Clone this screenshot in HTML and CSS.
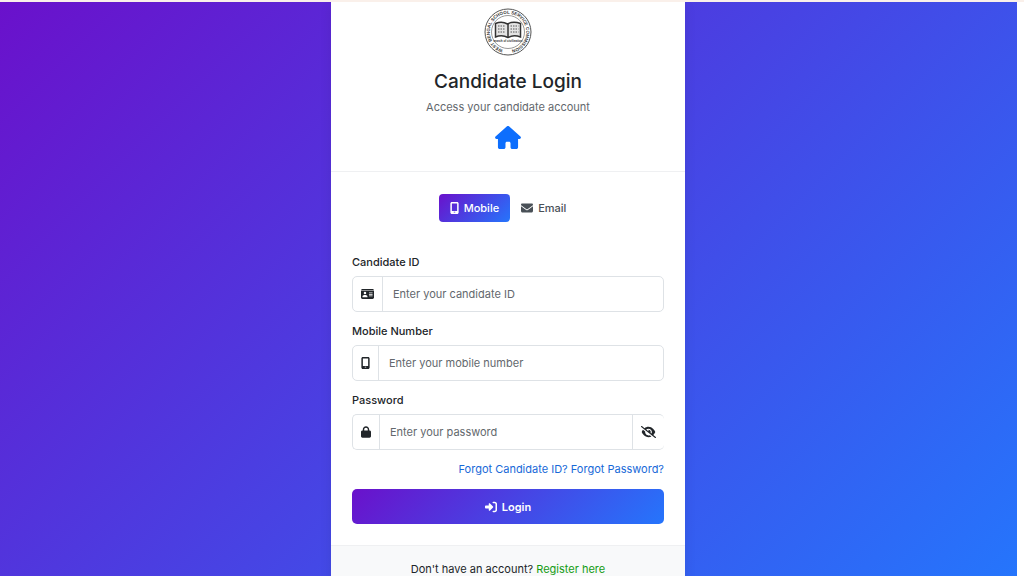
FILE: index.html
```html
<!DOCTYPE html>
<html lang="en">
<head>
<meta charset="utf-8">
<meta name="viewport" content="width=device-width, initial-scale=1">
<title>Candidate Login</title>
<link rel="stylesheet" href="styles.css">
</head>
<body>
<main class="scene">
  <section class="card">
    <header class="card-header">
      <svg class="seal" viewBox="0 0 96 96" role="img" aria-label="West Bengal School Service Commission">
        <defs><path id="ring" d="M48 84.500A36.500 36.500 0 1 1 48.100 84.500"/></defs>
        <circle cx="48" cy="48" r="46" fill="#fff" stroke="#555" stroke-width="2"/>
        <circle cx="48" cy="48" r="33" fill="none" stroke="#777" stroke-width="1.500"/>
        <text class="seal-text"><textPath href="#ring" startOffset="10">WEST BENGAL SCHOOL SERVICE COMMISSION</textPath></text>
        <path d="M23 31Q36 26 47 32Q58 26 73 31V58Q59 53 48 59Q36 53 23 58Z" fill="#e4e4e4" stroke="#333" stroke-width="3"/>
        <path d="M48 32V59" stroke="#333" stroke-width="3"/>
        <path d="M28 36H43M28 42H43M28 48H43M53 36H69M53 42H69M53 48H69" stroke="#555" stroke-width="2" stroke-dasharray="3 2"/>
        <text class="seal-motto" x="48" y="67">march of civilization</text>
      </svg>
      <h1 class="title">Candidate Login</h1>
      <p class="subtitle">Access your candidate account</p>
      <a class="home" href="#" aria-label="Home">
        <svg viewBox="0 0 576 512" width="26" height="23" fill="currentColor"><path d="M575.8 255.5c0 18-15 32.100-32 32.100h-32l.7 160.200c0 2.700-.2 5.400-.5 8.100V472c0 22.100-17.900 40-40 40h-88c-22.100 0-40-17.900-40-40v-88.500c0-17.700-14.300-32-32-32h-48c-17.700 0-32 14.300-32 32V472c0 22.100-17.900 40-40 40h-88c-22.100 0-40-17.900-40-40V287.600H32c-18 0-32-14-32-32.100 0-9 3-17 10-24L266.400 8c7-7 15-8 22-8s15 2 21 7l255.400 224.500c8 7 12 15 11 24z"/></svg>
      </a>
    </header>
    <form class="card-body">
      <div class="tabs">
        <button class="tab tab-active" type="button">
          <svg viewBox="0 0 384 512" width="9" height="12" fill="currentColor"><path fill-rule="evenodd" d="M80 0h224c35 0 64 29 64 64v384c0 35-29 64-64 64H80c-35 0-64-29-64-64V64C16 29 45 0 80 0zm0 64v320h224V64zm80 352v32h64v-32z"/></svg>
          Mobile
        </button>
        <button class="tab" type="button">
          <svg viewBox="0 0 512 512" width="12" height="12" fill="currentColor"><path d="M48 64C21.500 64 0 85.500 0 112c0 15.100 7.100 29.300 19.200 38.400l217.600 163.200c11.400 8.500 27 8.500 38.400 0l217.600-163.200c12.100-9.100 19.200-23.300 19.200-38.400 0-26.500-21.500-48-48-48zM0 176v208c0 35.300 28.700 64 64 64h384c35.300 0 64-28.700 64-64V176L294.400 339.200c-22.800 17.100-54 17.100-76.800 0z"/></svg>
          Email
        </button>
      </div>
      <div class="field">
        <label for="candidate">Candidate ID</label>
        <div class="group">
          <span class="addon"><svg viewBox="0 0 576 512" width="13" height="12" fill="currentColor"><path fill-rule="evenodd" d="M64 32h448c35 0 64 29 64 64H0c0-35 29-64 64-64zM0 128h576v288c0 35-29 64-64 64H64c-35 0-64-29-64-64zm64 256c0 9 7 16 16 16h192c9 0 16-7 16-16 0-44-36-80-80-80h-64c-44 0-80 36-80 80zm112-112a56 56 0 1 0 0-112 56 56 0 0 0 0 112zm176-80v32h160v-32zm0 64v32h160v-32zm0 64v32h160v-32z"/></svg></span>
          <input id="candidate" type="text" placeholder="Enter your candidate ID">
        </div>
      </div>
      <div class="field">
        <label for="mobile">Mobile Number</label>
        <div class="group">
          <span class="addon"><svg viewBox="0 0 384 512" width="9" height="12" fill="currentColor"><path fill-rule="evenodd" d="M80 0h224c35 0 64 29 64 64v384c0 35-29 64-64 64H80c-35 0-64-29-64-64V64C16 29 45 0 80 0zm0 64v320h224V64zm80 352v32h64v-32z"/></svg></span>
          <input id="mobile" type="tel" placeholder="Enter your mobile number">
        </div>
      </div>
      <div class="field">
        <label for="password">Password</label>
        <div class="group group-open">
          <span class="addon"><svg viewBox="0 0 448 512" width="10" height="12" fill="currentColor"><path d="M144 144v48h160v-48c0-44.200-35.800-80-80-80s-80 35.800-80 80zm-64 48v-48C80 64.500 144.500 0 224 0s144 64.500 144 144v48h16c35.300 0 64 28.700 64 64v192c0 35.300-28.700 64-64 64H64c-35.300 0-64-28.700-64-64V256c0-35.300 28.700-64 64-64z"/></svg></span>
          <input id="password" type="password" placeholder="Enter your password">
          <button class="reveal" type="button" aria-label="Show password"><svg viewBox="0 0 640 512" width="15" height="12" fill="currentColor"><path d="M38.800 5.100C28.400-3.100 13.300-1.200 5.100 9.200S-1.200 34.700 9.200 42.900l592 464c10.400 8.200 25.500 6.300 33.700-4.100s6.300-25.500-4.100-33.700L525.600 386.700c39.600-40.600 66.400-86.100 79.900-118.400 3.300-7.900 3.300-16.700 0-24.600-14.900-35.700-46.200-87.700-93-131.100C465.500 68.800 400.800 32 320 32c-68.200 0-125 26.300-169.300 60.800zm184.300 144.400C248.600 126.200 282.700 112 320 112c79.500 0 144 64.500 144 144 0 24.900-6.300 48.300-17.400 68.700L408 294.500c8.400-19.300 10.600-41.400 4.800-63.300-11.100-41.500-47.800-69.400-88.600-71.100-5.800-.2-9.200 6.100-7.400 11.700 2.100 6.400 3.300 13.200 3.300 20.300 0 10.200-2.400 19.800-6.600 28.300zM373 389.900c-16.400 6.500-34.300 10.100-53 10.100-79.500 0-144-64.500-144-144 0-6.900.5-13.600 1.400-20.200l-94.300-74.300C60.300 191.200 44 220.800 34.500 243.700c-3.300 7.900-3.300 16.700 0 24.600 14.900 35.700 46.200 87.700 93 131.100C174.500 443.200 239.200 480 320 480c47.800 0 89.900-12.900 126.200-32.500z"/></svg></button>
        </div>
      </div>
      <div class="help">
        <a href="#">Forgot Candidate ID?</a>
        <a href="#">Forgot Password?</a>
      </div>
      <button class="submit" type="submit">
        <svg viewBox="0 0 512 512" width="12" height="12" fill="currentColor"><path d="M352 96h64c17.700 0 32 14.300 32 32v256c0 17.700-14.300 32-32 32h-64c-17.700 0-32 14.300-32 32s14.300 32 32 32h64c53 0 96-43 96-96V128c0-53-43-96-96-96h-64c-17.700 0-32 14.300-32 32s14.300 32 32 32zM342.600 278.600c12.500-12.500 12.500-32.800 0-45.300l-128-128c-9.200-9.200-22.900-11.900-34.900-6.900S160 115.100 160 128v64H32c-17.700 0-32 14.300-32 32v64c0 17.700 14.300 32 32 32h128v64c0 12.900 7.800 24.600 19.800 29.600s25.700 2.200 34.900-6.900z"/></svg>
        Login
      </button>
    </form>
    <footer class="card-footer">Don't have an account? <a class="register" href="#">Register here</a></footer>
  </section>
</main>
</body>
</html>
```
FILE: styles.css
```css
* { box-sizing: border-box; }

body {
  margin: 0;
  height: 100vh;
  overflow: hidden;
  display: flex;
  border-top: 2px solid #faf0ea;
  padding-right: 7px;
  background: #fff;
  color: #212529;
  font: 12px/18px Inter, "Liberation Sans", sans-serif;
}

a { color: #1769d8; text-decoration: none; }
button, input { font: inherit; color: inherit; }
svg { display: block; flex: none; }

.scene {
  flex: 1;
  display: flex;
  justify-content: center;
  align-items: flex-start;
  padding-right: 1px;
  background: linear-gradient(135deg, #6a11cb, #2575fc);
}

.card {
  width: 100%;
  max-width: 354px;
  background: #fff;
  box-shadow: 0 4px 12px rgba(0, 0, 0, 0.08);
}

.card-header {
  display: flex;
  flex-direction: column;
  align-items: center;
  padding: 6px 20px 22px;
  border-bottom: 1px solid #eff0f2;
}

.seal { width: 48px; height: 48px; }
.seal-text { font: 700 9px "Liberation Sans", sans-serif; fill: #333; }
.seal-motto { font: 700 6px "Liberation Sans", sans-serif; fill: #333; text-anchor: middle; }

.title { margin: 14px 0 0; font-size: 19px; line-height: 24px; font-weight: 500; }
.subtitle { margin: 4px 0 0; color: #63686d; font-size: 11px; }
.home { margin-top: 10px; color: #0d6efd; }

.card-body { padding: 22px 21px 21px; }

.tabs { display: flex; justify-content: center; margin-bottom: 31px; }

.tab {
  display: flex;
  align-items: center;
  gap: 5px;
  height: 28px;
  padding: 0 11px;
  border: 0;
  border-radius: 4px;
  background: none;
  color: #495057;
  font-size: 11px;
  font-weight: 500;
}

.tab-active { background: linear-gradient(135deg, #6a11cb, #2575fc); color: #fff; }

.field { margin-bottom: 10px; }
.field label { display: block; margin-bottom: 5px; font-size: 11px; font-weight: 500; }

.group {
  display: flex;
  height: 36px;
  border: 1px solid #dee2e6;
  border-radius: 5px;
  overflow: hidden;
}

.group-open { border-right: 0; }

.addon {
  display: flex;
  align-items: center;
  padding: 0 8px;
  border-right: 1px solid #dee2e6;
}

.group input {
  flex: 1;
  min-width: 0;
  padding: 0 10px;
  border: 0;
  outline: 0;
  background: none;
  font-size: 11px;
}

.group input::placeholder { color: #63686d; opacity: 1; }

.reveal {
  display: flex;
  align-items: center;
  padding: 0 8px;
  border: 0;
  border-left: 1px solid #dee2e6;
  background: none;
}

.help { margin-bottom: 11px; font-size: 11px; text-align: right; }

.submit {
  display: flex;
  align-items: center;
  justify-content: center;
  gap: 5px;
  width: 100%;
  height: 35px;
  border: 0;
  border-radius: 5px;
  background: linear-gradient(135deg, #6a11cb, #2575fc);
  color: #fff;
  font-size: 11px;
  font-weight: 600;
}

.card-footer {
  padding: 14px 20px;
  border-top: 1px solid #eff0f2;
  background: #f8f9fa;
  text-align: center;
  font-size: 11px;
}

.register { color: #159c15; }
```
